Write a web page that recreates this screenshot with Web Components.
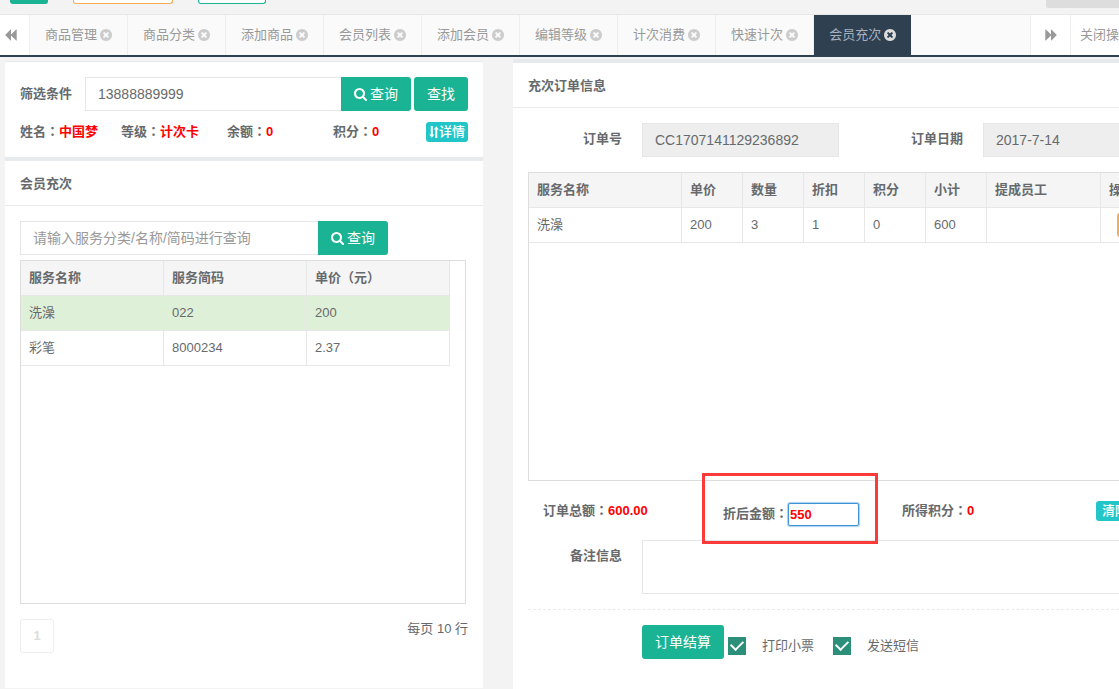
<!DOCTYPE html>
<html lang="zh-CN">
<head>
<meta charset="utf-8">
<title>会员充次</title>
<style>
html,body{margin:0;background:#f3f3f3}
body{font:13px/20px "Liberation Sans","Noto Sans CJK SC",sans-serif;color:#676a6c;overflow:hidden}
</style>
</head>
<body>
<recharge-app></recharge-app>
<script>
const BASE = `
*{box-sizing:border-box}
:host{display:block}
button,input,textarea{font:inherit;color:inherit;margin:0;border-radius:0}
button{cursor:pointer;white-space:nowrap}
.btn{display:flex;align-items:center;justify-content:center;gap:3px;height:34px;padding:0 13px;border:0;border-radius:3px;background:#1ab394;color:#fff;font-size:14px;flex:none}
.mini{display:flex;align-items:center;justify-content:center;height:20px;border:0;border-radius:3px;background:#23c6c8;color:#fff;font-weight:500;padding:0 4px}
.field{height:34px;border:1px solid #e5e6e7;background:#fff;padding:0 12px;font-size:14px;min-width:0;width:100%;outline:0}
.field::placeholder{color:#999;opacity:1}
.field[readonly]{background:#eee}
.group{display:flex}
.group .btn{border-radius:0 3px 3px 0}
.group .field{border-right-width:0;flex:1}
b,label.k{font-weight:700}
.c{font-family:"Noto Sans CJK TC",sans-serif;line-height:0}
.v{color:#f00}
table{border-collapse:separate;border-spacing:0;table-layout:fixed}
th,td{height:35px;padding:0 8px;text-align:left;border-right:1px solid #e7e7e7;border-bottom:1px solid #e7e7e7;white-space:nowrap;overflow:hidden}
th{background:#f5f5f6;font-weight:700}
tr.on td{background:#dff0d8}
.box{border:1px solid #ddd;overflow:hidden}
`;
const make = (name, css, html) => {
  const t = document.createElement('template');
  customElements.define(name, class extends HTMLElement {
    connectedCallback() {
      if (this.shadowRoot) return;
      t.innerHTML = `<style>${BASE}${css}</style>${html}`;
      this.attachShadow({ mode: 'open' }).append(t.content.cloneNode(true));
    }
  });
};

const ICONS = {
  search: ['64 128 1664 1664', 13, '<path d="M1216 832q0-185-131.500-316.500t-316.500-131.500-316.500 131.500-131.500 316.500 131.500 316.500 316.500 131.500 316.500-131.500 131.500-316.500zm512 832q0 52-38 90t-90 38q-54 0-90-38l-343-342q-179 124-399 124-143 0-273.500-55.500t-225-150-150-225-55.500-273.500 55.500-273.500 150-225 225-150 273.500-55.500 273.500 55.500 225 150 150 225 55.500 273.500q0 220-124 399l343 343q37 37 37 90z"/>'],
  close: ['128 128 1536 1536', 12, '<path d="M1277 1122q0-26-19-45l-181-181 181-181q19-19 19-45 0-27-19-46l-90-90q-19-19-46-19-26 0-45 19l-181 181-181-181q-19-19-45-19-27 0-46 19l-90 90q-19 19-19 46 0 26 19 45l181 181-181 181q-19 19-19 45 0 27 19 46l90 90q19 19 46 19 26 0 45-19l181-181 181 181q19 19 45 19 27 0 46-19l90-90q19-19 19-46zm387-226q0 209-103 385.500t-279.500 279.500-385.500 103-385.500-103-279.500-279.500-103-385.500 103-385.500 279.500-279.500 385.500-103 385.500 103 279.500 279.500 103 385.500z"/>'],
  back: ['0 0 12 12', 12, '<path d="M6 .5v4.900L11.200.4l.5.200v10.800l-.5.200L6 6.600v4.900l-.5.100L.2 6 5.500.4z"/>'],
  forward: ['0 0 12 12', 12, '<path d="M6 .5v4.900L.8.400l-.5.200v10.800l.5.200L6 6.600v4.900l.5.100L11.800 6 6.500.4z"/>'],
  swap: ['0 0 10 12', 10, '<path d="M1.800 0h2v8.500H5.200L2.800 11.800.2 8.500h1.600zM6.300 12h2V3.500h1.500L7.300.2 4.800 3.500h1.500z"/>']
};
customElements.define('app-icon', class extends HTMLElement {
  connectedCallback() {
    if (this.shadowRoot) return;
    const [box, size, body] = ICONS[this.getAttribute('name')];
    this.attachShadow({ mode: 'open' }).innerHTML =
      `<style>:host{display:block;flex:none}svg{display:block;fill:currentColor}</style><svg width="${size}" height="${size === 10 ? 12 : size}" viewBox="${box}" aria-hidden="true">${body}</svg>`;
  }
});

make('nav-tab', `
:host{flex:none;border-right:1px solid #eee;color:#999}
button{display:flex;align-items:center;gap:3px;height:40px;padding:0 15px;border:0;background:none}
app-icon{color:#ccc}
:host([active]){background:#2f4050;color:#a7b1c2;border-color:#fafafa}
:host([active]) app-icon{color:#ddd}
`, `<button type="button"><slot></slot><app-icon name="close"></app-icon></button>`);

make('top-actions', `
:host{display:flex;align-items:flex-start;height:14px;padding-left:10px;overflow:hidden}
button{height:4px;padding:0;border:1px solid #1ab394;border-top:0;border-radius:0 0 3px 3px;background:#fff}
.a{width:38px;background:#1ab394;margin-right:25px}
.b{width:100px;border-color:#f8ac59;margin-right:25px}
.d{width:68px}
.e{width:73px;height:8px;background:#ddd;border:0;border-radius:0 0 0 2px;margin-left:auto}
`, `<button class="a" aria-label="新增"></button><button class="b" aria-label="编辑"></button><button class="d" aria-label="刷新"></button><button class="e" aria-label="更多"></button>`);

make('tab-bar', `
:host{border-top:1px solid #e7e7e7;border-bottom:2px solid #2f4050;background:#fafafa}
nav{display:flex;height:40px}
.tabs{display:flex;flex:1;min-width:0;overflow:hidden}
.side{flex:none;display:flex;align-items:center;height:40px;border:0;background:#fff;color:#999;padding:0;overflow:hidden}
.l{width:30px;border-right:1px solid #eee;padding-left:5px}
.r{width:40px;border-left:1px solid #eee;padding-left:14px}
.o{width:49px;border-left:1px solid #eee;padding-left:9px}
`, `<nav><button class="side l" aria-label="向左"><app-icon name="back"></app-icon></button>
<div class="tabs"><slot></slot></div>
<button class="side r" aria-label="向右"><app-icon name="forward"></app-icon></button>
<button class="side o">关闭操作</button></nav>`);

make('panel-title', `
:host{border-top:4px solid #e7eaec;border-bottom:1px solid #e7eaec;background:#fff}
h5{margin:0;padding:13px 15px 11px;font-size:13px;line-height:20px}
`, `<h5><slot></slot></h5>`);

make('member-filter', `
:host{background:#fff;border-top:1px solid #e7eaec;padding:15px}
.row{display:flex;align-items:center;gap:3px}
.row label{width:62px;flex:none}
.group{flex:1}
.info{display:grid;grid-template-columns:101fr 106fr 106fr 93fr 42px;grid-template-rows:20px;margin-top:11px;white-space:nowrap}
`, `<div class="row"><label class="k" for="q">筛选条件</label><div class="group"><input class="field" id="q" value="13888889999"><button class="btn"><app-icon name="search"></app-icon>查询</button></div><button class="btn">查找</button></div>
<div class="info"><b>姓名<span class="c" lang="zh-TW">：</span><span class="v">中国梦</span></b><b>等级<span class="c" lang="zh-TW">：</span><span class="v">计次卡</span></b><b>余额<span class="c" lang="zh-TW">：</span><span class="v">0</span></b><b>积分<span class="c" lang="zh-TW">：</span><span class="v">0</span></b><button class="mini"><app-icon name="swap"></app-icon>详情</button></div>`);

make('service-list', `
:host{background:#fff;padding:15px 15px 35px}
.group{margin-right:80px}
.box{height:344px;margin:5px 2px 15px 0;padding-right:15px}
table{width:100%}
.foot{display:flex;justify-content:space-between;height:34px}
.page{width:34px;height:34px;border:1px solid #eee;border-radius:3px;background:#fff;color:#ddd;padding:0;font-weight:700}
`, `<div class="group"><input class="field" aria-label="服务查询" placeholder="请输入服务分类/名称/简码进行查询"><button class="btn"><app-icon name="search"></app-icon>查询</button></div>
<div class="box"><table><thead><tr><th>服务名称</th><th>服务简码</th><th>单价<span class="c" lang="zh-TW">（</span>元<span class="c" lang="zh-TW">）</span></th></tr></thead>
<tbody><tr class="on"><td>洗澡</td><td>022</td><td>200</td></tr><tr><td>彩笔</td><td>8000234</td><td>2.37</td></tr></tbody></table></div>
<div class="foot"><button class="page" disabled>1</button><span>每页 10 行</span></div>`);

make('order-form', `
:host{padding:15px 0 15px 15px;overflow:hidden}
.head{display:grid;grid-template-columns:94px 217px 124px 1fr}
.memo{display:grid;grid-template-columns:94px 1fr}
.k{text-align:right;padding-top:6px}
.head .in,.memo div{padding-left:20px}
.open{border-right:0}
.box{margin-top:15px;height:309px;border-right:0}
table{width:100%;min-width:660px}
.w1{width:153px}
.w2{width:61px}
.w3{width:114px}
td:last-child{padding-left:16px}
.del{display:block;width:40px;height:24px;border:0;border-radius:3px;background:#f8ac59;color:#fff;padding:0}
.sum{display:grid;grid-template-columns:180px 179px 194px 1fr;height:59px;padding:20px 0 0 15px;align-items:start;white-space:nowrap}
.pay{position:relative;display:flex;align-items:center;height:26px}
.pay label{font-weight:700}
.pay input{width:71px;height:23px;border:1px solid #3d95d6;border-radius:2px;box-shadow:0 0 1px 1px #a9cff5;color:#f00;font-weight:700;padding:0 1px;outline:0;background:#fff}
.mark{position:absolute;left:-21px;top:-28px;width:176px;height:71px;border:3px solid #fb3a3a;pointer-events:none}
.mini{width:60px;padding:0 6px;justify-content:flex-start}
textarea{display:block;width:100%;height:54px;border:1px solid #e5e6e7;border-right:0;resize:none;outline:0;background:#fff}
hr{border:0;border-top:1px dashed #e7eaec;margin:15px 0}
.end{display:flex;padding-left:114px;gap:4px}
.chk{display:flex;align-items:center;gap:16px;margin:12px 15px 0 0;height:18px}
.chk input{appearance:none;width:18px;height:18px;background:#2b8f7a;display:grid;place-items:center}
.chk input:checked::before{content:"";width:10px;height:6px;border:solid #fff;border-width:0 0 2px 2px;transform:translateY(-2px) rotate(-45deg)}
`, `<div class="head"><label class="k" for="no">订单号</label><div class="in"><input class="field" id="no" readonly value="CC1707141129236892"></div><label class="k" for="dt">订单日期</label><div class="in"><input class="field open" id="dt" readonly value="2017-7-14"></div></div>
<div class="box"><table><colgroup><col class="w1"><col class="w2"><col class="w2"><col class="w2"><col class="w2"><col class="w2"><col class="w3"><col></colgroup>
<thead><tr><th>服务名称</th><th>单价</th><th>数量</th><th>折扣</th><th>积分</th><th>小计</th><th>提成员工</th><th>操作</th></tr></thead>
<tbody><tr><td>洗澡</td><td>200</td><td>3</td><td>1</td><td>0</td><td>600</td><td></td><td><button class="del" aria-label="删除"></button></td></tr></tbody></table></div>
<div class="sum"><b>订单总额<span class="c" lang="zh-TW">：</span><span class="v">600.00</span></b>
<div class="pay"><label for="pay">折后金额<span class="c" lang="zh-TW">：</span></label><input id="pay" value="550"><span class="mark"></span></div>
<b>所得积分<span class="c" lang="zh-TW">：</span><span class="v">0</span></b><button class="mini">清除</button></div>
<div class="memo"><label class="k" for="memo">备注信息</label><div><textarea id="memo"></textarea></div></div>
<hr>
<div class="end"><button class="btn">订单结算</button><label class="chk"><input type="checkbox" checked>打印小票</label><label class="chk"><input type="checkbox" checked>发送短信</label></div>`);

make('recharge-app', `
:host{display:flex;flex-direction:column;min-height:100vh}
main{flex:1;display:grid;grid-template-columns:minmax(0,478fr) minmax(0,606fr);gap:30px;padding-left:5px}
.left{align-self:start;padding-top:4px}
.right{background:#fff;margin-top:2px}
`, `<top-actions></top-actions>
<tab-bar><nav-tab>商品管理</nav-tab><nav-tab>商品分类</nav-tab><nav-tab>添加商品</nav-tab><nav-tab>会员列表</nav-tab><nav-tab>添加会员</nav-tab><nav-tab>编辑等级</nav-tab><nav-tab>计次消费</nav-tab><nav-tab>快速计次</nav-tab><nav-tab active>会员充次</nav-tab></tab-bar>
<main><section class="left"><member-filter></member-filter><panel-title>会员充次</panel-title><service-list></service-list></section>
<section class="right"><panel-title>充次订单信息</panel-title><order-form></order-form></section></main>`);
</script>
</body>
</html>
